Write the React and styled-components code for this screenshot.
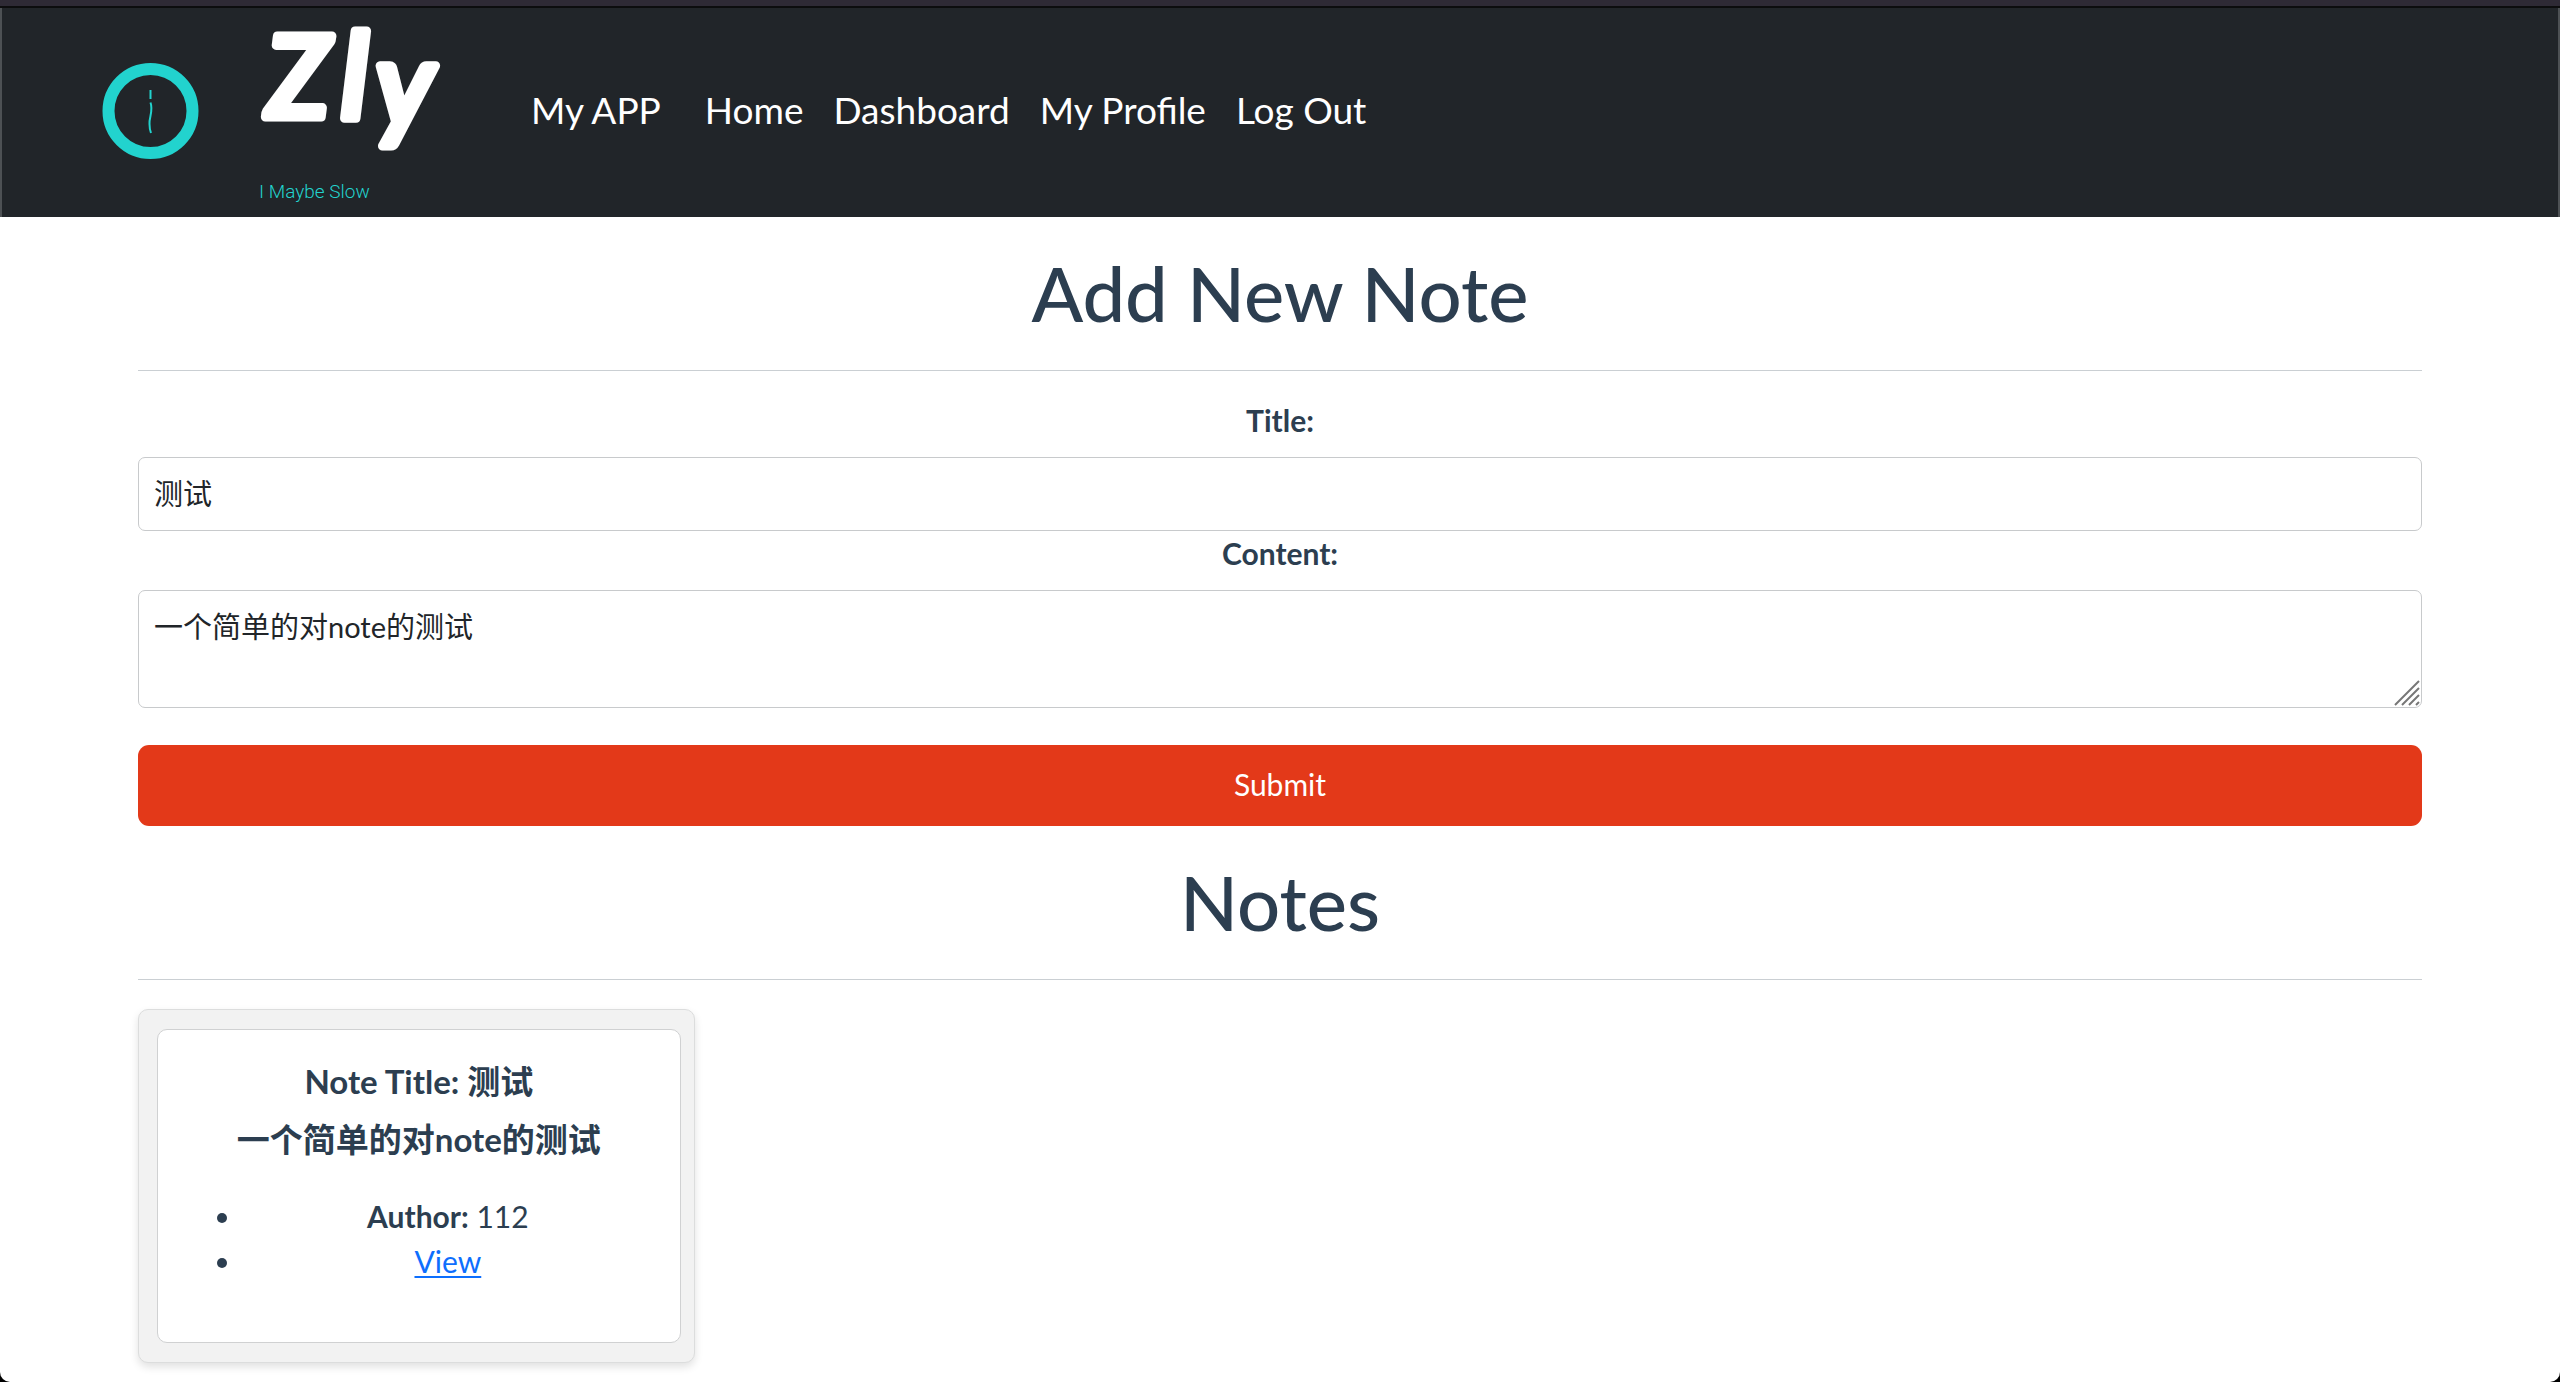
import React from "react";
import styled, { createGlobalStyle } from "styled-components";

const GlobalStyle = createGlobalStyle`
  * { box-sizing: border-box; }
  body {
    margin: 0;
    background: #000;
    font-family: Lato, "Noto Sans CJK SC", sans-serif;
    font-size: 30px;
    line-height: 45px;
    color: #2c3e50;
  }
`;

const Page = styled.div`
  min-height: 100vh;
  background: #fff;
  border-radius: 0 0 10px 10px;
  text-align: center;
`;

const WindowEdge = styled.div`
  height: 8px;
  background: #2e2a35;
  border-bottom: 2px solid #0c0d0e;
`;

const Navbar = styled.nav`
  display: flex;
  align-items: center;
  height: 209px;
  padding-left: 98px;
  background: #212529;
  border: solid #4d5154;
  border-width: 0 2px;
`;

const Logo = styled.svg`
  width: 400px;
  height: 209px;
  flex: none;
  overflow: visible;
`;

const NavLink = styled.a`
  padding-bottom: 6px;
  color: #fff;
  font-size: 37px;
  line-height: 54px;
  text-decoration: none;
  white-space: nowrap;
`;

const Brand = styled(NavLink)`
  margin: 0 44px 0 31px;
`;

const NavList = styled.div`
  display: flex;
  gap: 30px;
`;

const Container = styled.main`
  padding: 0 138px 16px;
`;

const Heading = styled.h1`
  margin: 0;
  padding: 32px 0 34px;
  font-size: 76px;
  line-height: 87px;
  font-weight: 500;
  border-bottom: 1px solid #cacfd3;
`;

const Form = styled.form`
  display: flex;
  flex-direction: column;
  padding-top: 27px;
`;

const Label = styled.label`
  margin-bottom: 15px;
  line-height: 44px;
  font-weight: 700;
`;

const fieldStyle = `
  display: block;
  width: 100%;
  margin: 0;
  border: 1px solid #c8cacc;
  border-radius: 7px;
  background: #fff;
  color: #212529;
  font: inherit;
  font-size: 29px;
`;

const TextInput = styled.input`
  ${fieldStyle}
  height: 74px;
  padding: 10px 15px 14px;
`;

const TextAreaWrap = styled.div`
  position: relative;
`;

const TextArea = styled.textarea`
  ${fieldStyle}
  height: 118px;
  padding: 13px 15px 10px;
  resize: none;
  overflow: hidden;
`;

const Grip = styled.svg`
  position: absolute;
  right: 2px;
  bottom: 2px;
  width: 26px;
  height: 26px;
  pointer-events: none;
`;

const SubmitButton = styled.button`
  height: 81px;
  margin-top: 37px;
  padding-bottom: 4px;
  border: 0;
  border-radius: 11px;
  background: #e33919;
  color: #fff;
  font: inherit;
`;

const NoteGrid = styled.section`
  display: grid;
  grid-template-columns: repeat(4, 1fr);
  gap: 19px;
  padding-top: 29px;
`;

const Tile = styled.div`
  padding: 19px 13px 19px 18px;
  border: 1px solid #dcdddd;
  border-radius: 10px;
  background: #f2f2f2;
  box-shadow: 0 4px 8px rgba(0, 0, 0, 0.12);
`;

const Card = styled.article`
  padding: 29px 28px 58px;
  border: 1px solid #d0d1d2;
  border-radius: 10px;
  background: #fff;
`;

const CardTitle = styled.h2`
  margin: 0 0 14px;
  font-size: 33px;
  line-height: 44px;
  font-weight: 700;
`;

const Details = styled.ul`
  margin: 33px 0 0;
  padding-left: 58px;
`;

const ViewLink = styled.a`
  color: #0d6efd;
  text-underline-offset: 3px;
  text-decoration-thickness: 2px;
`;

const BrandLogo = () => (
  <Logo viewBox="100 8 400 209" role="img" aria-label="Zly, I Maybe Slow">
    <circle cx="150.5" cy="111" r="42" fill="none" stroke="#22d3ce" strokeWidth="12" />
    <path
      d="M150.5 90V99M150.5 102.500C153.500 111 149 117 149.500 124Q149.500 129 151 133"
      fill="none"
      stroke="#22d3ce"
      strokeWidth="2"
    />
    <text
      x="267 341 376"
      y="117 118 126"
      fill="#fff"
      stroke="#fff"
      strokeWidth="9"
      strokeLinejoin="round"
      fontFamily="Lato, sans-serif"
      fontSize="112"
      fontWeight="500"
      fontStyle="italic"
    >
      Z<tspan fontSize="119">ly</tspan>
    </text>
    <text x="259" y="198" fill="#22d3ce" fontFamily="Roboto, sans-serif" fontSize="19" fontWeight="300">
      I Maybe Slow
    </text>
  </Logo>
);

const links = ["Home", "Dashboard", "My Profile", "Log Out"];

export default function App() {
  return (
    <Page>
      <GlobalStyle />
      <WindowEdge />
      <Navbar>
        <BrandLogo />
        <Brand href="#app">My APP</Brand>
        <NavList>
          {links.map((name) => (
            <NavLink key={name} href="#nav">{name}</NavLink>
          ))}
        </NavList>
      </Navbar>
      <Container>
        <Heading>Add New Note</Heading>
        <Form onSubmit={(e) => e.preventDefault()}>
          <Label htmlFor="title">Title:</Label>
          <TextInput id="title" defaultValue="测试" />
          <Label htmlFor="content">Content:</Label>
          <TextAreaWrap>
            <TextArea id="content" defaultValue="一个简单的对note的测试" />
            <Grip viewBox="0 0 26 26" aria-hidden="true">
              <path d="M1 25L25 1M8 25L25 8M15 25L25 15M22 25L25 22" stroke="#777" strokeWidth="2" />
            </Grip>
          </TextAreaWrap>
          <SubmitButton type="submit">Submit</SubmitButton>
        </Form>
        <Heading as="h2">Notes</Heading>
        <NoteGrid>
          <Tile>
            <Card>
              <CardTitle>Note Title: 测试</CardTitle>
              <CardTitle as="h3">一个简单的对note的测试</CardTitle>
              <Details>
                <li><strong>Author:</strong> 112</li>
                <li><ViewLink href="#view">View</ViewLink></li>
              </Details>
            </Card>
          </Tile>
        </NoteGrid>
      </Container>
    </Page>
  );
}
